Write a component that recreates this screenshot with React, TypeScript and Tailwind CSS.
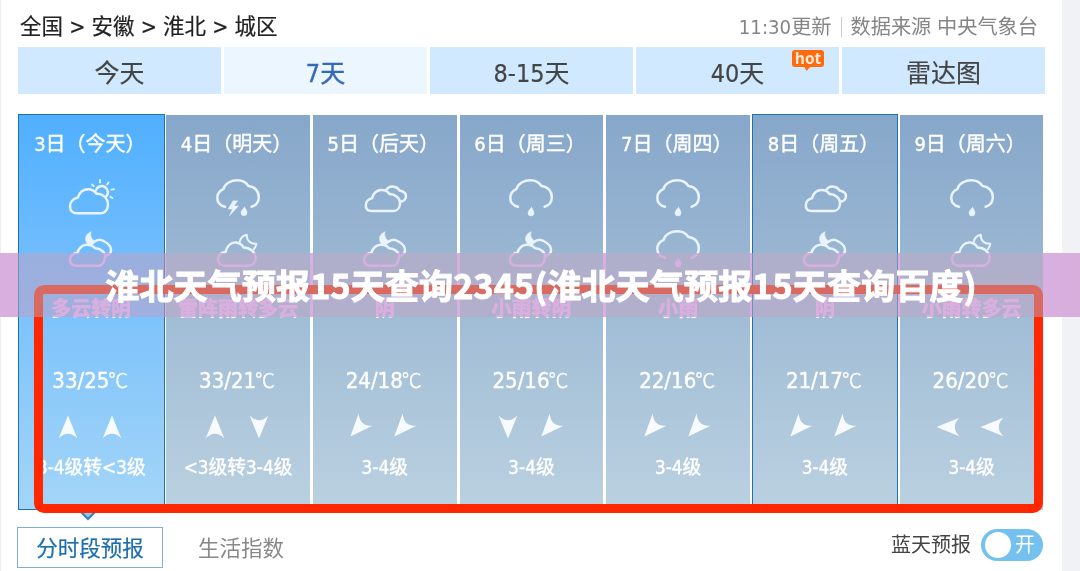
import type { ReactNode } from 'react';
import clsx from 'clsx';

type Sky = 'sunCloud' | 'moonCloud' | 'overcast' | 'overcastNight' | 'rain' | 'thunder';
type Wind = 'up' | 'down' | 'southwest' | 'left';

interface Day {
  date: string;
  day: Sky;
  night: Sky;
  text: string;
  temp: string;
  winds: [Wind, Wind];
  level: string;
  bordered?: boolean;
}

const TABS = ['今天', '7天', '8-15天', '40天', '雷达图'];

const DAYS: Day[] = [
  { date: '3日（今天）', day: 'sunCloud', night: 'overcastNight', text: '多云转阴', temp: '33/25', winds: ['up', 'up'], level: '3-4级转<3级', bordered: true },
  { date: '4日（明天）', day: 'thunder', night: 'moonCloud', text: '雷阵雨转多云', temp: '33/21', winds: ['up', 'down'], level: '<3级转3-4级' },
  { date: '5日（后天）', day: 'overcast', night: 'overcastNight', text: '阴', temp: '24/18', winds: ['southwest', 'southwest'], level: '3-4级' },
  { date: '6日（周三）', day: 'rain', night: 'overcastNight', text: '小雨转阴', temp: '25/16', winds: ['down', 'southwest'], level: '3-4级' },
  { date: '7日（周四）', day: 'rain', night: 'rain', text: '小雨', temp: '22/16', winds: ['southwest', 'southwest'], level: '3-4级' },
  { date: '8日（周五）', day: 'overcast', night: 'overcastNight', text: '阴', temp: '21/17', winds: ['southwest', 'southwest'], level: '3-4级', bordered: true },
  { date: '9日（周六）', day: 'rain', night: 'moonCloud', text: '小雨转多云', temp: '26/20', winds: ['left', 'left'], level: '3-4级' },
];

const WIND_ROTATION: Record<Wind, string> = {
  up: '',
  down: 'rotate-180',
  southwest: '-translate-x-[3px] translate-y-px rotate-[222deg]',
  left: '-rotate-90',
};

const RAIN_CLOUD = (
  <path d="M11 28.700C6 27.500 3.300 24 3.300 20c0-4.500 2.700-7.500 6.200-9.200C11 5.500 17 2.200 23.500 2.200 29 2.200 32.500 5 34.500 8c6.500.5 10.300 5.500 10.300 11 0 5-2.800 8.500-7.200 9.700" />
);

const SKY_ICONS: Record<Sky, ReactNode> = {
  sunCloud: (
    <>
      <path d="M10 35.300C5.500 35.300 3 32.500 3 28.500c0-4.500 3.500-8 8-9 1.500-5 5.500-8.200 10.300-8.200 3.700 0 6.200 1.700 8.200 4.500 4.500-.8 11.500 3.200 11.500 11.200-.2 5-3.500 8.300-7.500 8.300Z" />
      <path d="M28.800 12.500a6.200 6.200 0 1 1 10 6.500" />
      <path d="M33 2v2.500M41.500 4.500l-1.300 2M44.500 11.700l2.500-.6M43.300 18.700l2.200 1.300M25 6.500l1.800 1.700" strokeWidth="1.800" />
    </>
  ),
  overcast: (
    <>
      <path d="M11 33C7 33 4.800 31 4.800 27.500c0-4 2.700-6.500 6.200-7.300 1.500-5 5-8.200 9.500-8.200 3.500 0 6 1 8 4 5 0 11 4 10.500 10-.3 4-3 7-6.500 7Z" />
      <path d="M25.500 11.500c2-2.500 4.500-3.300 7.500-2.800 2.500.3 4.500 2 5.500 3.800 4 .8 6.800 3 6.500 6-.2 2.500-2 4.500-5 5" />
    </>
  ),
  overcastNight: (
    <>
      <path d="M10 36.700C5.500 36.700 3 34.500 3 31c0-4 3.500-7 7.500-7.500 1.500-4.500 4.500-7.500 9-7.800 3.500-.2 6.500 1 8.500 3.500 5 0 10.500 4 10 8.500-.5 5-2.500 9-6 9Z" />
      <path d="M27 13c3-2.500 6.500-3 9.500-1 4 2 7.500 5 7.500 9 0 3-2 5.200-5.500 6" />
      <path d="M24 3c-1.200 4 .8 7.500 4.500 9.500l-3.500 4c-3.500 0-6.500-3-6.500-6.500S20.500 4 24 3Z" fill="currentColor" strokeWidth="0.500" />
    </>
  ),
  moonCloud: (
    <>
      <path d="M11 36.700c-4.500 0-7-2.700-7-6.200 0-4.500 3.500-7 7.500-7.500 1.500-6 5.500-10 10.500-9.500 3.500.3 5.500 1.500 7.500 5 6 0 12 4 12 10.500 0 4.500-3 7.700-7.500 7.700Z" />
      <path d="M25.800 13c.5-4 3-6.500 7-7.300-.5 5.500 3.500 9.500 9.500 9-.3 2-1 4-2.300 5.500" strokeWidth="2" />
    </>
  ),
  rain: (
    <>
      {RAIN_CLOUD}
      <path d="M24.500 29.500c-2 2-3.500 3.700-3.500 5.500a3 3 0 0 0 6 0c0-1.700-.9-3.200-2.500-5.500Z" fill="currentColor" strokeWidth="0.500" />
    </>
  ),
  thunder: (
    <>
      {RAIN_CLOUD}
      <path d="M19 23 14 31h4.500L15.500 37.700l9-9.700h-4.500l3.500-5ZM30.500 29.200c-2 2-3.500 3.700-3.500 5.500a3 3 0 0 0 6 0c0-1.700-.9-3.200-2.500-5.500Z" fill="currentColor" strokeWidth="0.500" />
    </>
  ),
};

function SkyIcon({ sky }: { sky: Sky }) {
  return (
    <svg
      viewBox="0 0 48 40"
      className="h-10 w-12 overflow-visible text-[#e9f4ff]"
      fill="none"
      stroke="currentColor"
      strokeWidth="2.500"
      strokeLinecap="round"
      strokeLinejoin="round"
    >
      {SKY_ICONS[sky]}
    </svg>
  );
}

function WindArrow({ wind }: { wind: Wind }) {
  return (
    <svg viewBox="0 0 18 22" className={clsx('h-[22px] w-[18px] overflow-visible text-[#f7fbff]', WIND_ROTATION[wind])} fill="currentColor">
      <path d="M9-.5 18.300 22.300C15 19.500 12.500 17.800 9 17.800S3 19.500-.3 22.300Z" />
    </svg>
  );
}

function DayColumn({ item, today }: { item: Day; today: boolean }) {
  return (
    <div className={clsx('h-[396px]', !item.bordered && 'px-[1.5px] pt-px')}>
      <div
        className={clsx(
          'flex h-full flex-col items-center bg-linear-to-b whitespace-nowrap text-white [-webkit-text-stroke:0.4px_white]',
          today ? 'from-[#4fafff] to-[#a4d5f7]' : 'from-[#87a7ca] to-[#bad1e0]',
          item.bordered && 'border border-[#1c72ad]',
        )}
      >
        <div className="flex h-[57px] items-center pr-[3px] text-[20px]">{item.date}</div>
        <div className="flex h-[52px] items-center">
          <SkyIcon sky={item.day} />
        </div>
        <div className="flex h-[50px] items-center">
          <SkyIcon sky={item.night} />
        </div>
        <div className="flex h-[70px] items-center text-[20px] font-bold">{item.text}</div>
        <div className="flex h-[72px] items-center pr-0.5 text-[22px]">
          {item.temp}
          <span className="-ml-px font-['Noto_Sans_CJK_SC',sans-serif] text-[20px] font-light">℃</span>
        </div>
        <div className="flex h-[22px] items-center gap-[26px] pr-[3px]">
          {item.winds.map((wind, i) => (
            <WindArrow key={i} wind={wind} />
          ))}
        </div>
        <div className="flex h-[60px] items-center text-[18.800px]">{item.level}</div>
      </div>
    </div>
  );
}

export default function App() {
  return (
    <div className="relative flex h-[571px] w-[1080px] overflow-hidden bg-[#f1f2f5] font-['DejaVu_Sans_Condensed','Noto_Sans_CJK_SC',sans-serif]">
      <div className="flex w-[1062px] flex-col border-l border-[#efefef] bg-white pl-[17px]">
        <header className="flex h-[47px] w-[1020px] items-center justify-between pt-[7px] pl-0.5 whitespace-nowrap">
          <nav className="flex items-center text-[21.500px] text-[#222] [-webkit-text-stroke:0.2px_#222]">全国 &gt; 安徽 &gt; 淮北 &gt; 城区</nav>
          <p className="flex items-center text-[20.200px] text-[#858585]">
            11:30更新
            <span className="mr-[9px] ml-[9px] h-5 w-px bg-[#ccc]" />
            数据来源 中央气象台
          </p>
        </header>

        <div className="grid h-[47px] w-[1027px] shrink-0 grid-cols-5 gap-[3px] text-[25px] text-[#444]">
          {TABS.map((tab) => (
            <button
              key={tab}
              className={clsx(
                'relative flex items-center justify-center pt-1.5',
                tab === '7天' ? 'bg-[#ebf6ff] text-[#3568b8] [-webkit-text-stroke:0.4px_#3568b8]' : 'bg-[#d0e9ff] [-webkit-text-stroke:0.2px_#444]',
              )}
            >
              {tab}
              {tab === '40天' && (
                <span className="absolute top-[3px] right-[15px] flex h-[17px] w-8 items-center justify-center rounded-[3px] bg-[#ff6a0a] font-['Open_Sans',sans-serif] text-[15.500px] font-bold text-[#ffe9d9] [-webkit-text-stroke:0]">
                  hot
                  <svg viewBox="0 0 7 5" className="absolute top-4 left-3 h-[5px] w-[7px] fill-[#ff6a0a]">
                    <path d="M0 0h7L2.500 5Z" />
                  </svg>
                </span>
              )}
            </button>
          ))}
        </div>

        <div className="mt-5 grid w-[1027px] shrink-0 grid-cols-7">
          {DAYS.map((item, i) => (
            <DayColumn key={item.date} item={item} today={i === 0} />
          ))}
        </div>

        <svg viewBox="0 0 16 11" className="ml-[62px] h-[11px] w-4 shrink-0 fill-[#8fc8f0] stroke-[#3a80b4]" strokeWidth="2">
          <path d="M1 2 8 9l7-7" />
        </svg>

        <footer className="mt-1.5 flex h-[41px] w-[1025px] shrink-0 items-center whitespace-nowrap">
          <button className="-ml-px flex h-[41px] w-[146px] items-center justify-center border border-[#7fb0d6] pt-[3px] text-[21.500px] text-[#1c6fac] [-webkit-text-stroke:0.2px_#1c6fac]">
            分时段预报
          </button>
          <button className="ml-[35px] pt-[3px] text-[21.500px] text-[#888]">生活指数</button>
          <span className="mr-2.5 ml-auto -mt-1.5 text-[20px] text-[#444]">蓝天预报</span>
          <span className="-mt-1.5 flex h-8 w-[62px] items-center justify-between rounded-full bg-[#74c0ee] pr-2 pl-1">
            <span className="size-[26px] rounded-full bg-white" />
            <span className="text-[20px] text-white">开</span>
          </span>
        </footer>
      </div>

      {/* highlight frame round the forecast values */}
      <div className="absolute top-[285px] left-[34px] h-[228px] w-[1009px] rounded-[10px] border-[9px] border-[#ff2600]" />

      {/* the second layer tints only what is still brighter than it */}
      <div className="absolute top-[253px] left-0 h-16 w-full bg-[#c3aec4]/50" />
      <div className="absolute top-[253px] left-0 h-16 w-full bg-[#d8afde] mix-blend-darken" />
      <h1 className="absolute top-[252px] left-0 flex h-16 w-full items-center justify-center pl-0.5 font-['Noto_Sans_CJK_SC',sans-serif] text-[34px] font-bold tracking-[0.18px] whitespace-nowrap text-white [-webkit-text-stroke:1px_white]">
        淮北天气预报15天查询2345(淮北天气预报15天查询百度)
      </h1>
    </div>
  );
}
